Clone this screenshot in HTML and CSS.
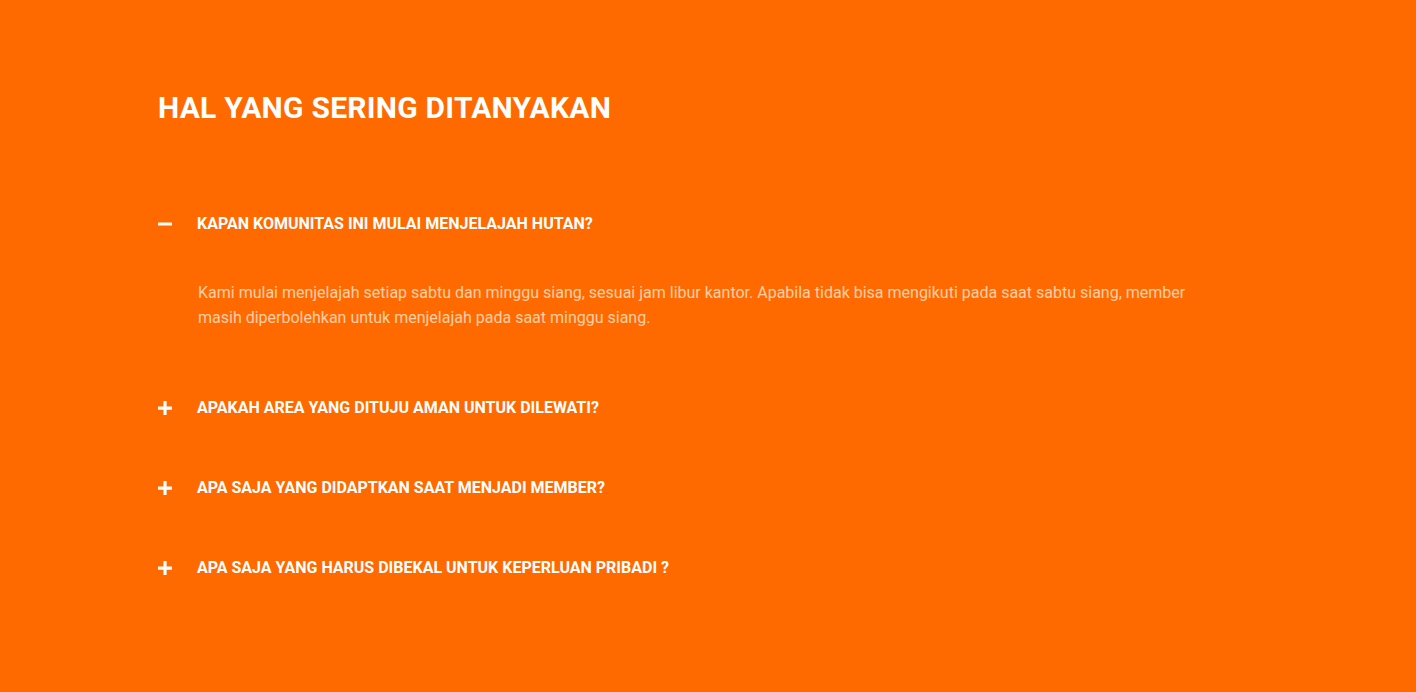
FILE: index.html
```html
<!DOCTYPE html>
<html lang="id">
<head>
<meta charset="utf-8">
<title>FAQ</title>
<link rel="stylesheet" href="styles.css">
</head>
<body>
<section class="faq">
  <h1 class="faq-title">HAL YANG SERING DITANYAKAN</h1>
  <div class="faq-list">
    <div class="faq-item open">
      <div class="faq-q">
        <span class="icon"><svg width="14" height="14" viewBox="0 0 14 14"><rect x="0" y="5.5" width="14" height="3" rx="0.5" fill="#fff"/></svg></span>
        <span class="q-text">KAPAN KOMUNITAS INI MULAI MENJELAJAH HUTAN?</span>
      </div>
      <div class="faq-a">Kami mulai menjelajah setiap sabtu dan minggu siang, sesuai jam libur kantor. Apabila tidak bisa mengikuti pada saat sabtu siang, member masih diperbolehkan untuk menjelajah pada saat minggu siang.</div>
    </div>
    <div class="faq-item">
      <div class="faq-q">
        <span class="icon"><svg width="14" height="14" viewBox="0 0 14 14"><rect x="0" y="5.5" width="14" height="3.2" rx="0.5" fill="#fff"/><rect x="5.4" y="0" width="3.2" height="14" rx="0.5" fill="#fff"/></svg></span>
        <span class="q-text">APAKAH AREA YANG DITUJU AMAN UNTUK DILEWATI?</span>
      </div>
    </div>
    <div class="faq-item">
      <div class="faq-q">
        <span class="icon"><svg width="14" height="14" viewBox="0 0 14 14"><rect x="0" y="5.5" width="14" height="3.2" rx="0.5" fill="#fff"/><rect x="5.4" y="0" width="3.2" height="14" rx="0.5" fill="#fff"/></svg></span>
        <span class="q-text">APA SAJA YANG DIDAPTKAN SAAT MENJADI MEMBER?</span>
      </div>
    </div>
    <div class="faq-item">
      <div class="faq-q">
        <span class="icon"><svg width="14" height="14" viewBox="0 0 14 14"><rect x="0" y="5.5" width="14" height="3.2" rx="0.5" fill="#fff"/><rect x="5.4" y="0" width="3.2" height="14" rx="0.5" fill="#fff"/></svg></span>
        <span class="q-text">APA SAJA YANG HARUS DIBEKAL UNTUK KEPERLUAN PRIBADI ?</span>
      </div>
    </div>
  </div>
</section>
</body>
</html>
```
FILE: styles.css
```css
html, body {
  margin: 0;
  padding: 0;
}
body {
  background: #ff6a00;
  font-family: Roboto, "Liberation Sans", sans-serif;
  color: #fff;
  min-height: 692px;
}
.faq {
  padding: 90px 158px 80px 158px;
}
.faq-title {
  margin: 0;
  font-size: 30px;
  line-height: 36px;
  font-weight: 700;
  letter-spacing: 0.25px;
  color: #fff;
}
.faq-list {
  margin-top: 88px;
  display: flex;
  flex-direction: column;
  gap: 60px;
}
.faq-q {
  display: flex;
  align-items: center;
  height: 20px;
}
.icon {
  width: 39px;
  display: flex;
  align-items: center;
}
.icon svg {
  display: block;
}
.q-text {
  font-size: 16px;
  font-weight: 700;
  line-height: 20px;
}
.faq-a {
  padding: 46px 30px 8px 40px;
  font-size: 16px;
  line-height: 25px;
  color: #ffcfa8;
}
```
